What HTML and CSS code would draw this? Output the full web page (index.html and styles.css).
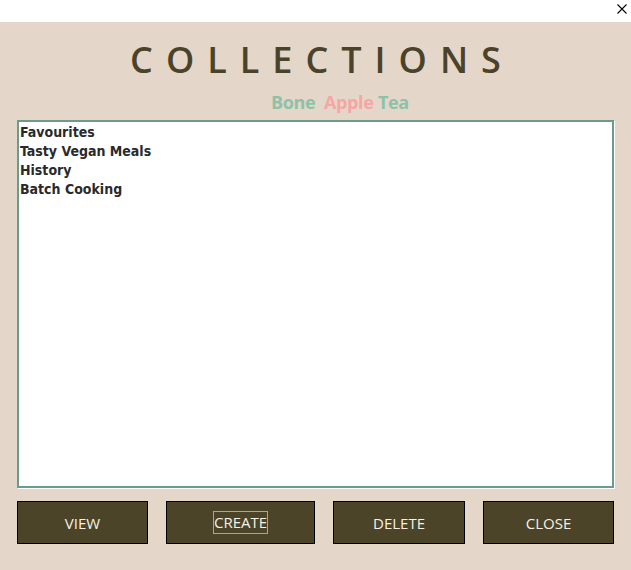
FILE: index.html
```html
<!DOCTYPE html>
<html>
<head>
<meta charset="utf-8">
<link rel="stylesheet" href="styles.css">
</head>
<body>
<div class="titlebar">
  <svg class="x-icon" width="10" height="10" viewBox="0 0 10 10"><path d="M0.5 0.5 L9.5 9.5 M9.5 0.5 L0.5 9.5" stroke="#000" stroke-width="1.1" fill="none"/></svg>
</div>
<main class="window">
  <h1 class="title">COLLECTIONS</h1>
  <div class="subtitle"><span class="green">Bone</span>&nbsp; <span class="pink">Apple</span> <span class="green">Tea</span></div>
  <ul class="listbox">
    <li>Favourites</li>
    <li>Tasty Vegan Meals</li>
    <li>History</li>
    <li>Batch Cooking</li>
  </ul>
  <div class="buttons">
    <button class="btn w131">VIEW</button>
    <button class="btn w149"><span class="focus">CREATE</span></button>
    <button class="btn w132">DELETE</button>
    <button class="btn w131">CLOSE</button>
  </div>
</main>
</body>
</html>
```
FILE: styles.css
```css
html, body { margin: 0; padding: 0; }
body { width: 631px; height: 570px; overflow: hidden; background: #e5d6ca; font-family: "Open Sans", sans-serif; }
.titlebar { height: 22px; background: #ffffff; display: flex; justify-content: flex-end; align-items: flex-start; }
.x-icon { margin-top: 4px; margin-right: 4px; }
.window { display: flex; flex-direction: column; padding: 20px 17px 0 17px; height: 528px; }
.title { margin: 0 0 0 13px; height: 36px; line-height: 36px; font-size: 36px; font-weight: 600; letter-spacing: 13px; color: #4b4329; text-align: center; }
.subtitle { margin-top: 15px; height: 18px; line-height: 18px; font-size: 18px; font-weight: 700; letter-spacing: -0.35px; text-align: left; padding-left: 254px; }
.green { color: #8dc2a8; }
.pink { color: #f6a6a4; }
.listbox { margin: 9px 0 0 0; padding: 1px 0 0 1px; list-style: none; background: #fff; box-sizing: border-box; height: 368px; border: 2px solid #6b9b8b; box-shadow: 1px 1px 0 #ffffff; font-family: "DejaVu Sans Condensed", "DejaVu Sans", sans-serif; font-weight: 700; font-size: 14px; line-height: 19px; color: #2a2a2a; }
.listbox li { height: 19px; }
.buttons { display: flex; gap: 18px; margin-top: 13px; }
.btn { height: 43px; background: #4b4429; border: 1px solid #000; color: #f6f1e4; font-family: "Open Sans", sans-serif; font-size: 15px; padding: 0; display: flex; align-items: center; justify-content: center; }
.w131 { width: 131px; }
.w132 { width: 132px; }
.w149 { width: 149px; }
.focus { border: 1px solid #9aa8b4; padding: 1px 0; line-height: 19px; }
```
